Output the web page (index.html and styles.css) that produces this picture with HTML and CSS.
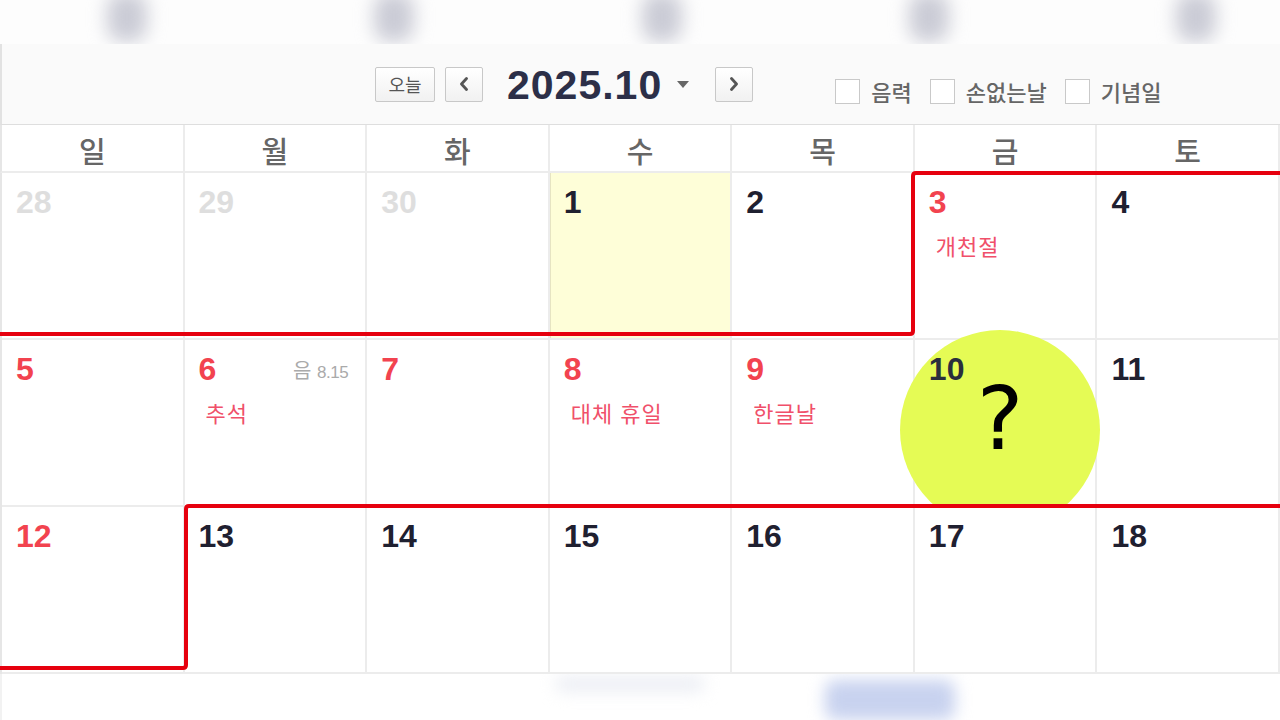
FILE: index.html
```html
<!DOCTYPE html>
<html lang="ko">
<head>
<meta charset="utf-8">
<title>2025.10 달력</title>
<link rel="stylesheet" href="styles.css">
</head>
<body>
<div class="page">
  <div class="topblur">
    <span class="blob"></span><span class="blob"></span><span class="blob"></span><span class="blob"></span><span class="blob"></span>
  </div>

  <div class="toolbar">
    <div class="nav">
      <button class="btn today">오늘</button>
      <button class="btn arrow"><svg width="10" height="14" viewBox="0 0 10 14"><path d="M7.5 1.5 L2.5 7 L7.5 12.5" fill="none" stroke="#555" stroke-width="2.8" stroke-linecap="round" stroke-linejoin="round"/></svg></button>
      <div class="title">2025.10</div>
      <span class="caret"></span>
      <button class="btn arrow next"><svg width="10" height="14" viewBox="0 0 10 14"><path d="M2.5 1.5 L7.5 7 L2.5 12.5" fill="none" stroke="#555" stroke-width="2.8" stroke-linecap="round" stroke-linejoin="round"/></svg></button>
    </div>
    <div class="opts">
      <label class="opt"><span class="box"></span>음력</label>
      <label class="opt"><span class="box"></span>손없는날</label>
      <label class="opt"><span class="box"></span>기념일</label>
    </div>
  </div>

  <div class="weekhead">
    <div class="wd">일</div><div class="wd">월</div><div class="wd">화</div><div class="wd">수</div><div class="wd">목</div><div class="wd">금</div><div class="wd">토</div>
  </div>

  <div class="weeks">
    <div class="day"><div class="top"><span class="num other">28</span></div></div>
    <div class="day"><div class="top"><span class="num other">29</span></div></div>
    <div class="day"><div class="top"><span class="num other">30</span></div></div>
    <div class="day today-cell"><div class="top"><span class="num">1</span></div></div>
    <div class="day"><div class="top"><span class="num">2</span></div></div>
    <div class="day"><div class="top"><span class="num red">3</span></div><div class="hol">개천절</div></div>
    <div class="day"><div class="top"><span class="num">4</span></div></div>

    <div class="day"><div class="top"><span class="num red">5</span></div></div>
    <div class="day"><div class="top"><span class="num red">6</span><span class="lunar">음 <b>8.15</b></span></div><div class="hol">추석</div></div>
    <div class="day"><div class="top"><span class="num red">7</span></div></div>
    <div class="day"><div class="top"><span class="num red">8</span></div><div class="hol">대체 휴일</div></div>
    <div class="day"><div class="top"><span class="num red">9</span></div><div class="hol">한글날</div></div>
    <div class="day"><div class="top"><span class="num front">10</span></div></div>
    <div class="day"><div class="top"><span class="num">11</span></div></div>

    <div class="day"><div class="top"><span class="num red">12</span></div></div>
    <div class="day"><div class="top"><span class="num">13</span></div></div>
    <div class="day"><div class="top"><span class="num">14</span></div></div>
    <div class="day"><div class="top"><span class="num">15</span></div></div>
    <div class="day"><div class="top"><span class="num">16</span></div></div>
    <div class="day"><div class="top"><span class="num">17</span></div></div>
    <div class="day"><div class="top"><span class="num">18</span></div></div>
  </div>

  <div class="bottomblur">
    <span class="bblob gray"></span>
    <span class="bblob blue"></span>
  </div>

  <div class="marker"><span class="q">?</span></div>

  <svg class="outline" width="1280" height="720" viewBox="0 0 1280 720">
    <path d="M0 334 H910 Q913 334 913 331 V176 Q913 173 916 173 H1282" />
    <path d="M0 668 H183 Q186 668 186 665 V509 Q186 506 189 506 H1282" />
  </svg>
</div>
</body>
</html>
```

FILE: styles.css
```css
* { box-sizing: border-box; margin: 0; padding: 0; }
html, body { width: 1280px; height: 720px; overflow: hidden; background: #fff; }
body { font-family: "Noto Sans CJK KR", "Noto Sans", sans-serif; }

.page { position: relative; width: 1280px; height: 720px; }

/* blurred top strip */
.topblur {
  height: 44px;
  display: flex;
  justify-content: space-between;
  padding: 0 64px 0 107px;
  background: #fdfdfd;
  overflow: hidden;
}
.blob {
  width: 40px;
  height: 50px;
  margin-top: -8px;
  background: #cbccd6;
  border-radius: 16px;
  filter: blur(9px);
}

/* toolbar */
.toolbar {
  height: 81px;
  background: #fafafa;
  border-left: 2px solid #e2e2e2;
  border-bottom: 1px solid #dedede;
  display: flex;
  align-items: center;
  padding-left: 373px;
}
.nav { display: flex; align-items: center; }
.btn {
  height: 35px;
  border: 1px solid #c8c8c8;
  border-radius: 2px;
  background: linear-gradient(#ffffff, #f1f1f1);
  display: flex;
  align-items: center;
  justify-content: center;
  font-family: "Noto Sans CJK KR", sans-serif;
}
.today { width: 60px; font-size: 18px; color: #555; }
.arrow { width: 38px; margin-left: 10px; }
.title {
  margin-left: 24px;
  font: bold 41px/1 "Liberation Sans", Arial, sans-serif;
  color: #2c2f48;
  letter-spacing: 1px;
  padding-top: 3px;
}
.caret {
  margin-left: 15px;
  width: 0; height: 0;
  border-left: 6px solid transparent;
  border-right: 6px solid transparent;
  border-top: 7px solid #666;
}
.arrow.next { margin-left: 26px; }

.opts { display: flex; align-items: center; gap: 18px; margin-left: 82px; padding-top: 14px; }
.opt { display: flex; align-items: center; gap: 11px; font-size: 22px; font-weight: 500; color: #666; }
.box { width: 25px; height: 25px; border: 1px solid #c9c9c9; background: #fff; }

/* week header */
.weekhead {
  display: grid;
  grid-template-columns: repeat(7, 1fr);
  height: 48px;
  border-left: 2px solid #e6e6e6;
  border-bottom: 2px solid #ececec;
  background: #fff;
}
.wd {
  border-right: 2px solid #ececec;
  display: flex;
  align-items: center;
  justify-content: center;
  padding-top: 3px;
  font-size: 29px;
  font-weight: 500;
  color: #666;
}

/* weeks */
.weeks {
  display: grid;
  grid-template-columns: repeat(7, 1fr);
  grid-template-rows: repeat(3, 167px);
  border-left: 2px solid #e6e6e6;
}
.day {
  border-right: 2px solid #ececec;
  border-bottom: 2px solid #ececec;
  padding: 13px 17px 0 14px;
}
.today-cell { background: #fefed8; box-shadow: inset 1px 0 0 #e6e4c2; }
.top { display: flex; justify-content: space-between; align-items: center; }
.num {
  font: bold 32px/32px "Liberation Sans", Arial, sans-serif;
  color: #1f2030;
}
.num.other { color: #dedede; }
.num.red { color: #f2434f; }
.num.front { position: relative; z-index: 2; color: #2a2e3c; }
.lunar { font-size: 20px; color: #aaa; }
.lunar b { font: 17px "Liberation Sans", Arial, sans-serif; letter-spacing: -0.5px; color: #aaa; }
.hol {
  margin: 12px 0 0 7px;
  font-size: 22px;
  line-height: 30px;
  color: #f0506a;
  letter-spacing: 1px;
}

/* bottom blur strip */
.bottomblur {
  height: 46px;
  display: flex;
  align-items: flex-start;
  border-left: 2px solid #f2f2f2;
  overflow: hidden;
}
.bblob { display: block; filter: blur(8px); border-radius: 10px; }
.bblob.gray { width: 150px; height: 16px; margin: 2px 0 0 553px; background: #eceef4; }
.bblob.blue { width: 130px; height: 40px; margin: 6px 0 0 120px; background: #c8d2ef; }

/* overlays */
.marker {
  position: absolute;
  left: 900px;
  top: 330px;
  width: 200px;
  height: 200px;
  border-radius: 50%;
  background: #e5fb55;
  clip-path: inset(0 0 24px 0);
  z-index: 1;
  display: flex;
  align-items: center;
  justify-content: center;
}
.q {
  font: 88px/1 "DejaVu Sans", sans-serif;
  color: #000;
  margin-top: -22px;
}
.outline {
  position: absolute;
  left: 0;
  top: 0;
  z-index: 3;
  pointer-events: none;
}
.outline path { fill: none; stroke: #e6000e; stroke-width: 4; stroke-linejoin: round; }
```
